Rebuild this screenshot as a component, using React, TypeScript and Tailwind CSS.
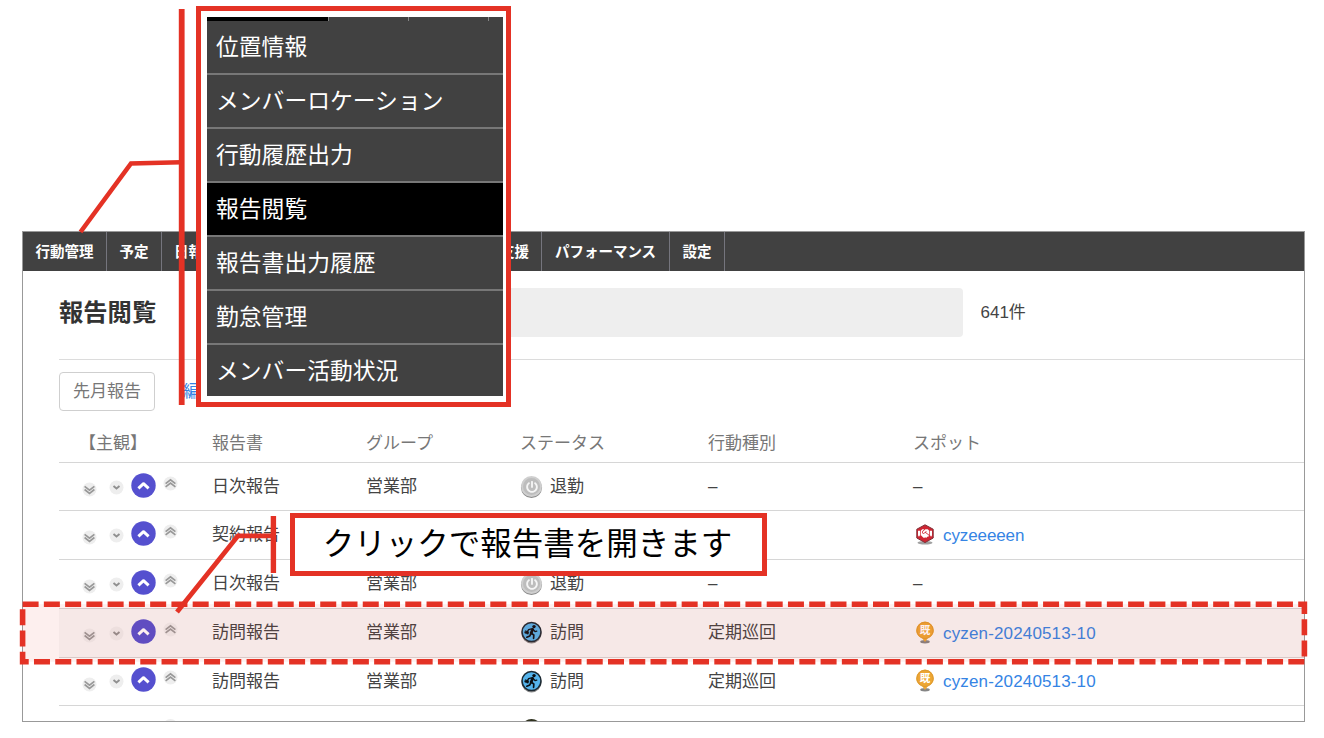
import React from 'react';
import { FaHandshake, FaPowerOff } from 'react-icons/fa';

type Status = 'leave' | 'visit';
type SpotKind = 'deal' | 'existing';

interface Report {
  name: string;
  group?: string;
  status?: Status;
  action?: string;
  spot?: { kind: SpotKind; label: string };
  selected?: boolean;
}

const REPORTS: Report[] = [
  { name: '日次報告', group: '営業部', status: 'leave', action: '–' },
  { name: '契約報告', spot: { kind: 'deal', label: 'cyzeeeeen' } },
  { name: '日次報告', group: '営業部', status: 'leave', action: '–' },
  { name: '訪問報告', group: '営業部', status: 'visit', action: '定期巡回', spot: { kind: 'existing', label: 'cyzen-20240513-10' }, selected: true },
  { name: '訪問報告', group: '営業部', status: 'visit', action: '定期巡回', spot: { kind: 'existing', label: 'cyzen-20240513-10' } },
];

const NAV_ITEMS = [
  { label: '行動管理', width: 'w-[84px]' },
  { label: '予定', width: 'w-[55px]' },
  { label: '日報', width: 'w-[54px]' },
  { label: '', width: 'w-[211px]' },
  { label: '支援', width: 'w-[115px] justify-end pr-[12px]' },
  { label: 'パフォーマンス', width: 'w-[128px]' },
  { label: '設定', width: 'w-[55px]' },
];

const MENU_ITEMS = ['位置情報', 'メンバーロケーション', '行動履歴出力', '報告閲覧', '報告書出力履歴', '勤怠管理', 'メンバー活動状況'];

const COLUMNS = 'grid grid-cols-[153px_154px_154px_188px_205px_1fr]';

/** 主観評価の4段階ボタン */
function RatingButtons() {
  return (
    <div className="flex items-start pl-[23px]">
      <svg className="mt-[9.5px] h-[15px] w-[15px]" viewBox="0 0 15 15" fill="none" stroke="#989898" strokeWidth="1.7">
        <circle cx="7.5" cy="7.5" r="7" fill="#eeeeee" stroke="none" />
        <path d="M2.6 4.3 7.5 8.1 12.4 4.3M2.6 7.5 7.5 11.3 12.4 7.5" />
      </svg>
      <svg className="mt-[7px] ml-[12px] h-[15px] w-[15px]" viewBox="0 0 15 15" fill="none" stroke="#909090" strokeWidth="1.9">
        <circle cx="7.5" cy="7.5" r="7" fill="#eeeeee" stroke="none" />
        <path d="M4.5 6.1 7.5 8.6 10.5 6.1" />
      </svg>
      <svg className="ml-[7px] h-[25px] w-[25px]" viewBox="0 0 25 25" fill="none" stroke="#ffffff" strokeWidth="3">
        <circle cx="12.5" cy="12.5" r="12.2" fill="#5550cf" stroke="none" />
        <path d="M7.4 15.3 12.5 10.7 17.6 15.3" strokeLinejoin="round" />
      </svg>
      <svg className="mt-[3px] ml-[7px] h-[15px] w-[15px]" viewBox="0 0 15 15" fill="none" stroke="#989898" strokeWidth="1.7">
        <circle cx="7.5" cy="7.5" r="7" fill="#eeeeee" stroke="none" />
        <path d="M2.6 7.6 7.5 3.8 12.4 7.6M2.6 10.8 7.5 7 12.4 10.8" />
      </svg>
    </div>
  );
}

/** ステータスのアイコンと名称 */
function StatusCell({ status }: { status: Status }) {
  if (status === 'leave') {
    return (
      <div className="flex items-center">
        <span className="ml-px flex h-[21px] w-[21px] items-center justify-center rounded-full border-2 border-[#cfcfcf] bg-[#bdbdbd] shadow-[0_1px_0_#888888]">
          <FaPowerOff className="h-[12px] w-[12px] text-[#f5f5f5]" />
        </span>
        <span className="ml-[8px]">退勤</span>
      </div>
    );
  }
  return (
    <div className="flex items-center">
      <svg className="ml-px" width="21" height="23" viewBox="0 0 21 23" fill="none" stroke="#0a0f14" strokeLinecap="round" strokeLinejoin="round">
        <circle cx="10.5" cy="12.4" r="10" fill="#8a8a8a" stroke="none" />
        <circle cx="10.5" cy="11" r="9.5" fill="#55b4ec" stroke="#1d2a33" strokeWidth="1.6" />
        <circle cx="13" cy="5.6" r="1.7" fill="#0a0f14" stroke="none" />
        <path d="M11.6 8.4 10.2 12" strokeWidth="2.8" />
        <path d="M10.6 7.8 7.6 8.6 6.4 10.6M12.4 8.6 14 10.6 15.8 10.2" strokeWidth="1.3" />
        <path d="M10.4 12.3 12.8 14 12.6 17.3M9.8 12.6 8.8 15 5.8 16.2" strokeWidth="1.7" />
        <path d="M4.6 9.8 7.8 10.9 7.1 13.2 3.9 12.1Z" fill="#0a0f14" strokeWidth=".6" />
      </svg>
      <span className="ml-[8px]">訪問</span>
    </div>
  );
}

function SpotIcon({ kind }: { kind: SpotKind }) {
  if (kind === 'deal') {
    return (
      <span className="relative flex h-[22px] w-[24px] items-center justify-center">
        <svg className="absolute inset-0" width="24" height="22" viewBox="0 0 24 22">
          <ellipse cx="12" cy="18.8" rx="7.5" ry="1.8" fill="#777777" opacity=".7" />
          <path d="M12 .8 20.2 5.2V14L12 18.6 3.8 14V5.2Z" fill="#cf2532" stroke="#7d3038" strokeWidth="1" />
        </svg>
        <FaHandshake className="relative -top-px h-[13px] w-[14px] text-white" />
      </span>
    );
  }
  return (
    <svg className="relative -top-px" width="24" height="24" viewBox="0 0 24 24">
      <ellipse cx="12" cy="21.8" rx="4.8" ry="1.7" fill="#666666" opacity=".8" />
      <path d="M12 22 9 18C5.4 16.8 3.2 13.8 3.2 10.4A8.8 8.8 0 0 1 20.8 10.4C20.8 13.8 18.6 16.8 15 18Z" fill="#eda633" />
      <circle cx="12" cy="10.4" r="8.1" fill="none" stroke="#dd9a30" strokeWidth="1" />
      <text x="12" y="14.2" textAnchor="middle" fontSize="10.5" fontWeight="700" fill="#ffffff">既</text>
    </svg>
  );
}

function ReportRow({ report, first }: { report: Report; first: boolean }) {
  return (
    <div className={`${COLUMNS} shrink-0 items-center border-b border-[#d6d6d6] text-[#444444] ${first ? 'h-[48px]' : 'h-[48.85px]'} ${report.selected ? 'bg-[#f8f8f8]' : ''}`}>
      <div className="-mt-[3px]"><RatingButtons /></div>
      <div>{report.name}</div>
      <div>{report.group}</div>
      <div>{report.status && <StatusCell status={report.status} />}</div>
      <div>{report.action}</div>
      {report.spot ? (
        <div className="flex items-center">
          <SpotIcon kind={report.spot.kind} />
          <span className={`ml-[6px] pt-px text-[#3584e4] ${report.spot.kind === 'existing' ? 'tracking-[0.15px]' : 'tracking-[-0.1px]'}`}>{report.spot.label}</span>
        </div>
      ) : (
        <div>–</div>
      )}
    </div>
  );
}

/** 行動管理のドロップダウンメニュー */
function ActionMenu() {
  return (
    <div className="absolute top-[6px] left-[196px] h-[401px] w-[315px] border-[5px] border-[#e43225] bg-white pt-[6px] pr-[3px] pl-[6px]">
      <div className="flex h-[4px] bg-[#414141]">
        <div className="w-[121px] bg-black" />
        <div className="w-[80px] border-l border-[#858585]" />
        <div className="w-[80px] border-l border-[#858585]" />
        <div className="flex-1 border-l border-[#858585]" />
      </div>
      {MENU_ITEMS.map((item, index) => (
        <div
          key={item}
          className={`flex items-center pl-[9px] text-[22.8px] text-white ${index === 3 ? 'bg-black' : 'bg-[#414141]'} ${index === MENU_ITEMS.length - 1 ? 'h-[51px] pt-[2px]' : 'h-[54px] border-b-2 border-[#777777]'}`}
        >
          {item}
        </div>
      ))}
    </div>
  );
}

export default function App() {
  return (
    <div className="relative h-[738px] w-[1324px] overflow-hidden bg-white pt-[231px] pl-[22px] font-['Liberation_Sans','Noto_Sans_CJK_JP',sans-serif] text-[17px] leading-none whitespace-nowrap">
      <div className="flex h-[491px] w-[1283px] flex-col overflow-hidden border border-[#999999]">
        <nav className="flex h-[39px] shrink-0 bg-[#414141] text-[14.5px] font-bold text-white">
          {NAV_ITEMS.map((item, index) => (
            <div key={index} className={`flex shrink-0 items-center justify-center border-r border-[#75757d] pt-px ${item.width}`}>
              {item.label}
            </div>
          ))}
        </nav>

        <main className="flex flex-1 flex-col pl-[36px]">
          <header className="flex h-[89px] shrink-0 items-center border-b border-[#dcdcdc] pb-[6px]">
            <h1 className="w-[241px] pt-[2px] text-[24.3px] font-bold text-[#333333]">報告閲覧</h1>
            <div className="h-[49px] w-[663px] rounded-[4px] bg-[#eeeeee]" />
            <span className="ml-[17.5px] text-[#444444]">641件</span>
          </header>

          <div className="flex h-[65px] shrink-0 items-start pt-[12px]">
            <button className="h-[39px] w-[96px] rounded-[4px] border border-[#cfcfcf] text-[17px] text-[#777777]">先月報告</button>
            <a className="mt-[11px] ml-[28px] w-[17px] overflow-hidden text-[#3584e4]">編</a>
          </div>

          <div className={`${COLUMNS} h-[38px] shrink-0 items-center border-b border-[#d6d6d6] text-[#777777]`}>
            <div className="pl-[20px]">【主観】</div>
            <div>報告書</div>
            <div>グループ</div>
            <div>ステータス</div>
            <div>行動種別</div>
            <div>スポット</div>
          </div>
          {REPORTS.map((report, index) => (
            <ReportRow key={index} report={report} first={index === 0} />
          ))}
          {/* 次の行は枠の下端で切れる */}
          <div className={`${COLUMNS} h-[48px] shrink-0 items-start pt-[13px]`}>
            <div className="pl-[104px]"><div className="h-[15px] w-[15px] rounded-full bg-[#eeeeee]" /></div>
            <div />
            <div />
            <div className="ml-px h-[21px] w-[21px] rounded-full border-2 border-[#30321f] bg-[#b5b64a]" />
          </div>
        </main>
      </div>

      {/* 選択行の強調と引き出し線 */}
      <svg className="absolute inset-0" width="1324" height="738" viewBox="0 0 1324 738" fill="none" stroke="#e43225">
        <rect x="22.6" y="604.2" width="1281.8" height="57.5" fill="#e43225" fillOpacity=".08" strokeWidth="5.6" strokeDasharray="16 5.26" />
        <path d="M181.7 9V405" strokeWidth="5.8" />
        <path d="M181 162.3 131 163.4 80.5 232" strokeWidth="4.6" />
        <path d="M273.4 516V573" strokeWidth="5.4" />
        <path d="M273 535.8H238L177 612" strokeWidth="4.8" />
      </svg>

      <ActionMenu />

      <div className="absolute top-[513px] left-[290px] flex h-[63px] w-[477px] items-center justify-center border-[5px] border-[#e43225] bg-white pt-px pr-[2px] text-[31.5px] text-black">
        クリックで報告書を開きます
      </div>
    </div>
  );
}
